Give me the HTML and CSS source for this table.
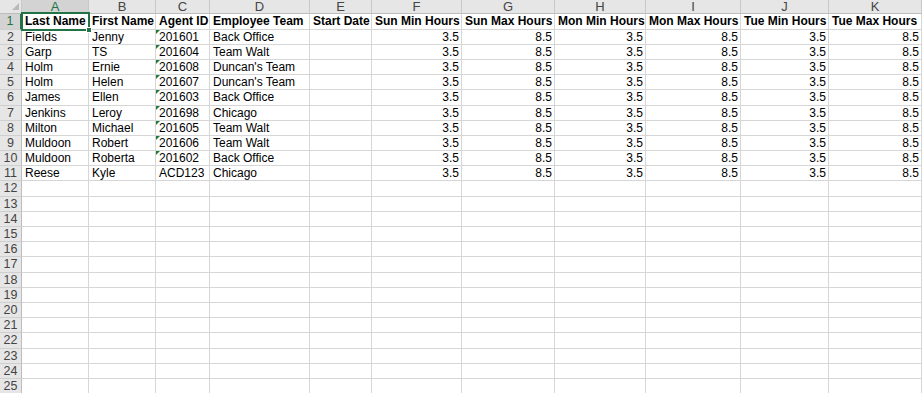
FILE: index.html
```html
<!DOCTYPE html>
<html>
<head>
<meta charset="utf-8">
<link rel="stylesheet" href="styles.css">
</head>
<body>
<div class="sheet">
<div class="ch corner"></div><div class="ch on">A</div><div class="ch">B</div><div class="ch">C</div><div class="ch">D</div><div class="ch">E</div><div class="ch">F</div><div class="ch">G</div><div class="ch">H</div><div class="ch">I</div><div class="ch">J</div><div class="ch">K</div>
<div class="rh on">1</div><div class="c b sel">Last Name</div><div class="c b">First Name</div><div class="c b">Agent ID</div><div class="c b">Employee Team</div><div class="c b">Start Date</div><div class="c b">Sun Min Hours</div><div class="c b">Sun Max Hours</div><div class="c b">Mon Min Hours</div><div class="c b">Mon Max Hours</div><div class="c b">Tue Min Hours</div><div class="c b">Tue Max Hours</div>
<div class="rh">2</div><div class="c">Fields</div><div class="c">Jenny</div><div class="c t">201601</div><div class="c">Back Office</div><div class="c"></div><div class="c n">3.5</div><div class="c n">8.5</div><div class="c n">3.5</div><div class="c n">8.5</div><div class="c n">3.5</div><div class="c n">8.5</div>
<div class="rh">3</div><div class="c">Garp</div><div class="c">TS</div><div class="c t">201604</div><div class="c">Team Walt</div><div class="c"></div><div class="c n">3.5</div><div class="c n">8.5</div><div class="c n">3.5</div><div class="c n">8.5</div><div class="c n">3.5</div><div class="c n">8.5</div>
<div class="rh">4</div><div class="c">Holm</div><div class="c">Ernie</div><div class="c t">201608</div><div class="c">Duncan's Team</div><div class="c"></div><div class="c n">3.5</div><div class="c n">8.5</div><div class="c n">3.5</div><div class="c n">8.5</div><div class="c n">3.5</div><div class="c n">8.5</div>
<div class="rh">5</div><div class="c">Holm</div><div class="c">Helen</div><div class="c t">201607</div><div class="c">Duncan's Team</div><div class="c"></div><div class="c n">3.5</div><div class="c n">8.5</div><div class="c n">3.5</div><div class="c n">8.5</div><div class="c n">3.5</div><div class="c n">8.5</div>
<div class="rh">6</div><div class="c">James</div><div class="c">Ellen</div><div class="c t">201603</div><div class="c">Back Office</div><div class="c"></div><div class="c n">3.5</div><div class="c n">8.5</div><div class="c n">3.5</div><div class="c n">8.5</div><div class="c n">3.5</div><div class="c n">8.5</div>
<div class="rh">7</div><div class="c">Jenkins</div><div class="c">Leroy</div><div class="c t">201698</div><div class="c">Chicago</div><div class="c"></div><div class="c n">3.5</div><div class="c n">8.5</div><div class="c n">3.5</div><div class="c n">8.5</div><div class="c n">3.5</div><div class="c n">8.5</div>
<div class="rh">8</div><div class="c">Milton</div><div class="c">Michael</div><div class="c t">201605</div><div class="c">Team Walt</div><div class="c"></div><div class="c n">3.5</div><div class="c n">8.5</div><div class="c n">3.5</div><div class="c n">8.5</div><div class="c n">3.5</div><div class="c n">8.5</div>
<div class="rh">9</div><div class="c">Muldoon</div><div class="c">Robert</div><div class="c t">201606</div><div class="c">Team Walt</div><div class="c"></div><div class="c n">3.5</div><div class="c n">8.5</div><div class="c n">3.5</div><div class="c n">8.5</div><div class="c n">3.5</div><div class="c n">8.5</div>
<div class="rh">10</div><div class="c">Muldoon</div><div class="c">Roberta</div><div class="c t">201602</div><div class="c">Back Office</div><div class="c"></div><div class="c n">3.5</div><div class="c n">8.5</div><div class="c n">3.5</div><div class="c n">8.5</div><div class="c n">3.5</div><div class="c n">8.5</div>
<div class="rh">11</div><div class="c">Reese</div><div class="c">Kyle</div><div class="c">ACD123</div><div class="c">Chicago</div><div class="c"></div><div class="c n">3.5</div><div class="c n">8.5</div><div class="c n">3.5</div><div class="c n">8.5</div><div class="c n">3.5</div><div class="c n">8.5</div>
<div class="rh">12</div><div class="c"></div><div class="c"></div><div class="c"></div><div class="c"></div><div class="c"></div><div class="c"></div><div class="c"></div><div class="c"></div><div class="c"></div><div class="c"></div><div class="c"></div>
<div class="rh">13</div><div class="c"></div><div class="c"></div><div class="c"></div><div class="c"></div><div class="c"></div><div class="c"></div><div class="c"></div><div class="c"></div><div class="c"></div><div class="c"></div><div class="c"></div>
<div class="rh">14</div><div class="c"></div><div class="c"></div><div class="c"></div><div class="c"></div><div class="c"></div><div class="c"></div><div class="c"></div><div class="c"></div><div class="c"></div><div class="c"></div><div class="c"></div>
<div class="rh">15</div><div class="c"></div><div class="c"></div><div class="c"></div><div class="c"></div><div class="c"></div><div class="c"></div><div class="c"></div><div class="c"></div><div class="c"></div><div class="c"></div><div class="c"></div>
<div class="rh">16</div><div class="c"></div><div class="c"></div><div class="c"></div><div class="c"></div><div class="c"></div><div class="c"></div><div class="c"></div><div class="c"></div><div class="c"></div><div class="c"></div><div class="c"></div>
<div class="rh">17</div><div class="c"></div><div class="c"></div><div class="c"></div><div class="c"></div><div class="c"></div><div class="c"></div><div class="c"></div><div class="c"></div><div class="c"></div><div class="c"></div><div class="c"></div>
<div class="rh">18</div><div class="c"></div><div class="c"></div><div class="c"></div><div class="c"></div><div class="c"></div><div class="c"></div><div class="c"></div><div class="c"></div><div class="c"></div><div class="c"></div><div class="c"></div>
<div class="rh">19</div><div class="c"></div><div class="c"></div><div class="c"></div><div class="c"></div><div class="c"></div><div class="c"></div><div class="c"></div><div class="c"></div><div class="c"></div><div class="c"></div><div class="c"></div>
<div class="rh">20</div><div class="c"></div><div class="c"></div><div class="c"></div><div class="c"></div><div class="c"></div><div class="c"></div><div class="c"></div><div class="c"></div><div class="c"></div><div class="c"></div><div class="c"></div>
<div class="rh">21</div><div class="c"></div><div class="c"></div><div class="c"></div><div class="c"></div><div class="c"></div><div class="c"></div><div class="c"></div><div class="c"></div><div class="c"></div><div class="c"></div><div class="c"></div>
<div class="rh">22</div><div class="c"></div><div class="c"></div><div class="c"></div><div class="c"></div><div class="c"></div><div class="c"></div><div class="c"></div><div class="c"></div><div class="c"></div><div class="c"></div><div class="c"></div>
<div class="rh">23</div><div class="c"></div><div class="c"></div><div class="c"></div><div class="c"></div><div class="c"></div><div class="c"></div><div class="c"></div><div class="c"></div><div class="c"></div><div class="c"></div><div class="c"></div>
<div class="rh">24</div><div class="c"></div><div class="c"></div><div class="c"></div><div class="c"></div><div class="c"></div><div class="c"></div><div class="c"></div><div class="c"></div><div class="c"></div><div class="c"></div><div class="c"></div>
<div class="rh">25</div><div class="c"></div><div class="c"></div><div class="c"></div><div class="c"></div><div class="c"></div><div class="c"></div><div class="c"></div><div class="c"></div><div class="c"></div><div class="c"></div><div class="c"></div>
</div>
</body>
</html>
```

FILE: styles.css
```css
html, body {
  margin: 0;
  background: #ffffff;
}

body {
  font-family: "Liberation Sans", Arial, sans-serif;
  font-size: 12px;
  color: #000000;
}

.sheet {
  display: grid;
  grid-template-columns: 22px 67px 67px 54px 100px 62px 90px 93px 91px 95px 88px 93px;
  grid-template-rows: 14.4px;
  grid-auto-rows: 15.2px;
  width: 922px;
}

.sheet > div {
  box-sizing: border-box;
  white-space: nowrap;
  overflow: hidden;
  position: relative;
}

.ch {
  background: #e6e6e6;
  border-right: 1px solid #c9c9c9;
  border-bottom: 1px solid #bdbdbd;
  color: #444444;
  text-align: center;
  line-height: 14px;
  font-size: 13px;
}

.ch.on {
  background: #d3d3d3;
  color: #217346;
  border-bottom: 2px solid #217346;
  line-height: 13px;
}

.corner::after {
  content: "";
  position: absolute;
  right: 2px;
  bottom: 3px;
  border-left: 7px solid transparent;
  border-bottom: 7px solid #b9b9b9;
}

.rh {
  background: #e6e6e6;
  border-right: 1px solid #bdbdbd;
  border-bottom: 1px solid #cfcfcf;
  color: #444444;
  text-align: center;
  line-height: 14.2px;
  font-size: 12.5px;
}

.rh.on {
  background: #d3d3d3;
  color: #217346;
  border-right: 2px solid #217346;
}

.c {
  border-right: 1px solid #d6d6d6;
  border-bottom: 1px solid #d6d6d6;
  padding: 0 2px 0 3px;
  line-height: 14.2px;
}

.b {
  font-weight: bold;
}

.n {
  text-align: right;
}

.t::before {
  content: "";
  position: absolute;
  left: 0;
  top: 0;
  border-top: 4px solid #1f7a3c;
  border-right: 4px solid transparent;
}

.sheet > .sel {
  overflow: visible;
  z-index: 2;
}

.sel::after {
  content: "";
  position: absolute;
  left: -1px;
  top: -2px;
  right: -2px;
  bottom: -2px;
  border: 2px solid #217346;
}

.sel::before {
  content: "";
  position: absolute;
  right: -4px;
  bottom: -4px;
  width: 4px;
  height: 4px;
  background: #217346;
  border: 1px solid #ffffff;
  z-index: 3;
}
```
